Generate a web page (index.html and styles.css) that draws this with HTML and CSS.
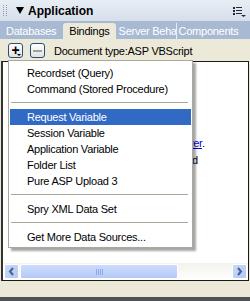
FILE: index.html
```html
<!DOCTYPE html>
<html lang="en">
<head>
    <meta charset="UTF-8">
    <title>Application - Bindings</title>
    <link rel="stylesheet" href="styles.css">
</head>
<body>
    <div class="panel-group">
        <div class="group-header">
            <svg class="grip" width="5" height="14" viewBox="0 0 5 14">
                <g fill="#8a9bb3">
                    <rect x="0" y="1" width="1" height="1"/><rect x="3" y="1" width="1" height="1"/>
                    <rect x="0" y="3" width="1" height="1"/><rect x="3" y="3" width="1" height="1"/>
                    <rect x="0" y="5" width="1" height="1"/><rect x="3" y="5" width="1" height="1"/>
                    <rect x="0" y="7" width="1" height="1"/><rect x="3" y="7" width="1" height="1"/>
                    <rect x="0" y="9" width="1" height="1"/><rect x="3" y="9" width="1" height="1"/>
                    <rect x="0" y="11" width="1" height="1"/><rect x="3" y="11" width="1" height="1"/>
                </g>
            </svg>
            <span class="caret"></span>
            <span class="group-title">Application</span>
            <svg class="options" width="13" height="11" viewBox="0 0 13 11">
                <g fill="#1e2a3a">
                    <rect x="0" y="1" width="2" height="2"/><rect x="3" y="1" width="6" height="1"/>
                    <rect x="0" y="4" width="2" height="2"/><rect x="3" y="4" width="6" height="1"/>
                    <rect x="0" y="7" width="2" height="2"/><rect x="3" y="7" width="6" height="1"/>
                    <polygon points="8,9 13,9 10.5,11"/>
                </g>
            </svg>
        </div>

        <div class="tabs">
            <span class="tab">Databases</span>
            <span class="tab active">Bindings</span>
            <span class="tab clipped">Server Behaviors</span>
            <span class="tab last">Components</span>
        </div>

        <div class="toolbar">
            <button class="tool-btn plus">
                <span class="glyph">+</span>
                <span class="drop"></span>
            </button>
            <button class="tool-btn minus"><span class="bar"></span></button>
            <span class="doc-type">Document type:ASP VBScript</span>
        </div>

        <div class="bindings">
            <div class="hint">
                <p class="lead">To use dynamic data on this page:</p>
                <ol>
                    <li>1. Create a <a href="#">site</a> for this file.</li>
                    <li>2. Choose a <a href="#">document type</a>.</li>
                    <li>3. Set up the site's <a href="#">testing server</a>.</li>
                    <li>4. Press the plus (+) button and</li>
                    <li>choose Recordset.</li>
                </ol>
            </div>
            <div class="hscroll">
                <span class="sb-btn">
                    <svg width="7" height="9" viewBox="0 0 7 9"><polyline points="5,1 2,4.5 5,8" fill="none" stroke="#4d6185" stroke-width="2"/></svg>
                </span>
                <span class="sb-thumb"><span class="sb-grip"></span></span>
                <span class="sb-track"></span>
                <span class="sb-btn">
                    <svg width="7" height="9" viewBox="0 0 7 9"><polyline points="2,1 5,4.5 2,8" fill="none" stroke="#4d6185" stroke-width="2"/></svg>
                </span>
            </div>
        </div>

        <div class="status-strip"></div>
        <div class="bottom-edge"></div>

        <ul class="menu">
            <li>Recordset (Query)</li>
            <li>Command (Stored Procedure)</li>
            <li class="sep"></li>
            <li class="selected">Request Variable</li>
            <li>Session Variable</li>
            <li>Application Variable</li>
            <li>Folder List</li>
            <li>Pure ASP Upload 3</li>
            <li class="sep"></li>
            <li>Spry XML Data Set</li>
            <li class="sep"></li>
            <li>Get More Data Sources...</li>
        </ul>
    </div>
</body>
</html>
```

FILE: styles.css
```css
html, body {
    margin: 0;
    padding: 0;
}
body {
    width: 250px;
    height: 301px;
    overflow: hidden;
    font-family: 'Liberation Sans', Arial, sans-serif;
    font-size: 11px;
    letter-spacing: -0.25px;
    color: #000;
    background: #ece9d8;
}
.panel-group {
    position: relative;
    display: flex;
    flex-direction: column;
    height: 301px;
}

/* header */
.group-header {
    height: 21px;
    display: flex;
    align-items: center;
    background: linear-gradient(#e8eef5, #d6dfea);
}
.grip {
    margin-left: 3px;
}
.caret {
    width: 0;
    height: 0;
    margin-left: 8px;
    border-left: 4px solid transparent;
    border-right: 4px solid transparent;
    border-top: 7px solid #000;
}
.group-title {
    margin-left: 4px;
    font-weight: bold;
    font-size: 12px;
    letter-spacing: 0;
}
.options {
    margin-left: auto;
    margin-right: 4px;
    margin-top: 1px;
}

/* tabs */
.tabs {
    height: 18px;
    display: flex;
    align-items: flex-end;
    background: #a8bad3;
    color: #fff;
}
.tab {
    height: 16px;
    line-height: 16px;
    padding: 0 6px;
    white-space: nowrap;
}
.tab.active {
    margin-left: 1px;
    padding: 0 6px 0 6px;
    background: #ece9d8;
    color: #000;
    border-radius: 3px 3px 0 0;
}
.tab.clipped {
    width: 57px;
    overflow: hidden;
    padding: 0 0 0 3px;
}
.tab.last {
    border-left: 1px solid #e8eef6;
    padding-left: 2px;
}

/* toolbar */
.toolbar {
    height: 22px;
    display: flex;
    align-items: center;
}
.tool-btn {
    position: relative;
    width: 15px;
    height: 15px;
    padding: 0;
    margin: 1px 0 0 8px;
    border: 1px solid #264c86;
    border-radius: 3px;
    background: linear-gradient(#ffffff, #e2e2dc);
    display: flex;
    align-items: center;
    justify-content: center;
}
.tool-btn.minus {
    margin-left: 7px;
}
.plus .glyph {
    font-weight: bold;
    font-size: 14px;
    line-height: 13px;
    margin-top: -1px;
}
.plus .drop {
    position: absolute;
    right: 1px;
    bottom: 1px;
    width: 0;
    height: 0;
    border-left: 2px solid transparent;
    border-right: 2px solid transparent;
    border-top: 2px solid #000;
}
.minus .bar {
    width: 9px;
    height: 2px;
    background: #a0a0a0;
}
.doc-type {
    margin-left: 9px;
    margin-top: 2px;
}

/* bindings panel */
.bindings {
    height: 218px;
    margin: 0 1px 0 1px;
    border: 1px solid #1a1a1a;
    border-left: 2px solid #333;
    background: #fff;
    display: flex;
    flex-direction: column;
}
.hint {
    flex: 1;
    padding: 22px 0 0 10px;
    overflow: hidden;
    white-space: nowrap;
}
.hint p,
.hint ol {
    margin: 0;
    padding: 0;
    line-height: 17px;
}
.hint ol {
    list-style: none;
    padding-left: 39px;
}
.hint a {
    color: #0000ee;
}
.hscroll {
    height: 16px;
    margin: 0 1px 1px 1px;
    display: flex;
    background: linear-gradient(#f3f2ec, #fefefe);
}
.sb-btn {
    width: 15px;
    height: 15px;
    border: 1px solid #fff;
    border-radius: 2px;
    background: linear-gradient(135deg, #c8d8fc, #b2c8f5);
    display: flex;
    align-items: center;
    justify-content: center;
    box-sizing: border-box;
    margin-top: 1px;
}
.sb-thumb {
    width: 158px;
    height: 15px;
    margin: 1px 0 0 1px;
    box-sizing: border-box;
    border: 1px solid #fff;
    border-radius: 2px;
    background: linear-gradient(#cddcfd, #b4caf7);
    display: flex;
    align-items: center;
    justify-content: center;
}
.sb-grip {
    width: 7px;
    height: 6px;
    background: repeating-linear-gradient(90deg, #8ea9e8 0 1px, transparent 1px 2px);
}
.sb-track {
    flex: 1;
}

.status-strip {
    height: 16px;
}
.bottom-edge {
    height: 4px;
    background: #4e5256;
}

/* dropdown menu */
.menu {
    position: absolute;
    left: 8px;
    top: 60px;
    width: 181px;
    margin: 0;
    padding: 4px 1px 2px 1px;
    list-style: none;
    background: #fff;
    border: 1px solid #aca899;
    box-shadow: 3px 3px 2px rgba(0, 0, 0, 0.35);
}
.menu li {
    height: 16px;
    line-height: 16px;
    padding-left: 17px;
    white-space: nowrap;
}
.menu li.selected {
    background: #316ac5;
    color: #fff;
}
.menu li.sep {
    height: 12px;
    padding: 0;
    background: linear-gradient(#aca899, #aca899) no-repeat 1px 5px / 177px 1px;
}
```
